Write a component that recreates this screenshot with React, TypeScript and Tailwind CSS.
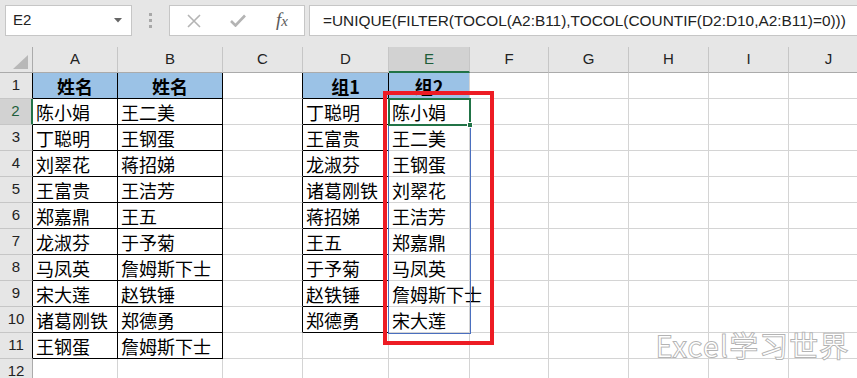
import React from "react";

const colW = [85, 105, 80, 86, 81, 79, 80, 80, 80, 80];
const letters = ["A", "B", "C", "D", "E", "F", "G", "H", "I", "J"];

const A = ["姓名", "陈小娟", "丁聪明", "刘翠花", "王富贵", "郑嘉鼎", "龙淑芬", "马凤英", "宋大莲", "诸葛刚铁", "王钢蛋"];
const B = ["姓名", "王二美", "王钢蛋", "蒋招娣", "王洁芳", "王五", "于予菊", "詹姆斯下士", "赵铁锤", "郑德勇", "詹姆斯下士"];
const D = ["组1", "丁聪明", "王富贵", "龙淑芬", "诸葛刚铁", "蒋招娣", "王五", "于予菊", "赵铁锤", "郑德勇"];
const E = ["组2", "陈小娟", "王二美", "王钢蛋", "刘翠花", "王洁芳", "郑嘉鼎", "马凤英", "詹姆斯下士", "宋大莲"];

const cjk = { fontFamily: '"Noto Sans CJK SC", "Noto Sans", sans-serif' };
const ui = { fontFamily: '"Liberation Sans", Arial, sans-serif' };

function cellValue(c: number, r: number): string {
  if (c === 0) return A[r] ?? "";
  if (c === 1) return B[r] ?? "";
  if (c === 3) return D[r] ?? "";
  if (c === 4) return E[r] ?? "";
  return "";
}

function rightBlack(c: number, r: number) {
  if ((c === 0 || c === 1) && r <= 10) return true;
  if ((c === 2 || c === 3) && r <= 9) return true;
  return false;
}
function bottomBlack(c: number, r: number) {
  if ((c === 0 || c === 1) && r <= 10) return true;
  if (c === 3 && r <= 9) return true;
  return false;
}

export default function App() {
  const rows = Array.from({ length: 12 }, (_, i) => i);
  return (
    <div className="relative w-[857px] h-[378px] overflow-hidden bg-white" style={ui}>
      {/* Toolbar */}
      <div className="h-[47px] bg-[#e6e6e6] flex items-start pt-[5px] pl-[5px]">
        <div className="w-[127px] h-[31px] bg-white border border-[#c6c6c6] flex items-center justify-between pl-[7px] pr-[9px]">
          <span className="text-[15px] text-[#222]">E2</span>
          <svg width="8" height="5" viewBox="0 0 8 5">
            <path d="M0 0 L8 0 L4 4.5 Z" fill="#666" />
          </svg>
        </div>
        <div className="w-[37px] h-[31px] flex flex-col items-center justify-center gap-[3px]">
          <div className="w-[3px] h-[3px] bg-[#a8a8a8]" />
          <div className="w-[3px] h-[3px] bg-[#a8a8a8]" />
          <div className="w-[3px] h-[3px] bg-[#a8a8a8]" />
        </div>
        <div className="w-[136px] h-[31px] bg-white border border-[#c6c6c6] flex items-center">
          <div className="w-[46px] flex justify-center pl-[2px]">
            <svg width="14" height="14" viewBox="0 0 14 14">
              <path d="M1 1 L13 13 M13 1 L1 13" stroke="#b4b4b4" strokeWidth="1.6" />
            </svg>
          </div>
          <div className="w-[44px] flex justify-center">
            <svg width="16" height="13" viewBox="0 0 16 13">
              <path d="M1 7 L5.5 11.5 L15 1.5" stroke="#b4b4b4" strokeWidth="2.6" fill="none" />
            </svg>
          </div>
          <div className="w-[44px] flex justify-center">
            <span className="text-[19px] italic text-[#5a5a5a]" style={{ fontFamily: '"Liberation Serif", serif' }}>
              f<span className="text-[15px]">x</span>
            </span>
          </div>
        </div>
        <div className="ml-[4px] flex-1 h-[31px] bg-white border border-[#c6c6c6] border-r-0 flex items-center pl-[13px]">
          <span className="text-[15.4px] text-[#222] whitespace-nowrap">
            =UNIQUE(FILTER(TOCOL(A2:B11),TOCOL(COUNTIF(D2:D10,A2:B11)=0)))
          </span>
        </div>
      </div>

      {/* Sheet grid */}
      <div
        className="grid"
        style={{
          gridTemplateColumns: `33px ${colW.map((w) => w + "px").join(" ")}`,
          gridTemplateRows: `26px repeat(12, 26px)`,
        }}
      >
        <div className="bg-[#e6e6e6] border-r border-b border-[#ababab] relative flex items-end justify-end pr-[4px] pb-[3px]">
          <svg width="15" height="14" viewBox="0 0 15 14">
            <path d="M15 0 L15 14 L0 14 Z" fill="#b8b8b8" />
          </svg>
        </div>
        {letters.map((l, i) => (
          <div
            key={l}
            className={
              i === 4
                ? "bg-[#d2d2d2] border-r border-[#c6c6c6] border-b-2 border-b-[#217346] flex items-center justify-center text-[15px] text-[#1e5e3a]"
                : "bg-[#e6e6e6] border-r border-[#c6c6c6] border-b border-b-[#ababab] flex items-center justify-center text-[15px] text-[#222]"
            }
          >
            {l}
          </div>
        ))}
        {rows.map((r) => (
          <React.Fragment key={r}>
            <div
              className={
                r === 1
                  ? "bg-[#d2d2d2] border-b border-b-[#c6c6c6] border-r-2 border-r-[#217346] flex items-center justify-center text-[15px] text-[#1e5e3a]"
                  : r <= 10
                  ? "bg-[#e6e6e6] border-b border-b-[#c6c6c6] border-r border-r-black flex items-center justify-center text-[15px] text-[#222]"
                  : "bg-[#e6e6e6] border-b border-b-[#c6c6c6] border-r border-r-[#ababab] flex items-center justify-center text-[15px] text-[#222]"
              }
            >
              {r + 1}
            </div>
            {colW.map((_, c) => {
              const v = cellValue(c, r);
              const header = r === 0 && (c === 0 || c === 1 || c === 3 || c === 4);
              const rb = rightBlack(c, r);
              const bb = bottomBlack(c, r);
              return (
                <div
                  key={c}
                  className={
                    (header ? "bg-[#9bc2e6] font-bold justify-center " : "pl-[3px] ") +
                    (rb ? "border-r border-r-black " : "border-r border-r-[#d4d4d4] ") +
                    (bb ? "border-b border-b-black " : "border-b border-b-[#d4d4d4] ") +
                    "flex items-center text-[18px] text-black whitespace-nowrap overflow-visible leading-none"
                  }
                  style={cjk}
                >
                  {v}
                </div>
              );
            })}
          </React.Fragment>
        ))}
      </div>

      {/* Spill range border */}
      <div className="absolute left-[388px] top-[98px] w-[83px] h-[236px] border border-[#4a6fbf] pointer-events-none" />
      {/* Active cell */}
      <div className="absolute left-[388px] top-[98px] w-[83px] h-[28px] border-2 border-[#217346] pointer-events-none" />
      <div className="absolute left-[467px] top-[122px] w-[6px] h-[6px] bg-[#217346] border border-white pointer-events-none" />
      {/* Red highlight */}
      <div className="absolute left-[383px] top-[91px] w-[111px] h-[254px] border-4 border-[#ed1c24] pointer-events-none" />
      {/* Watermark */}
      <div
        className="absolute left-[656px] top-[330px] text-[28px] leading-[30px] text-white whitespace-nowrap tracking-[2px] [-webkit-text-stroke:2px_#b4b4b4] [paint-order:stroke_fill]"
        style={{ fontFamily: '"Noto Sans CJK SC", "Liberation Sans", sans-serif', fontWeight: 300 }}
      >
        Excel学习世界
      </div>
    </div>
  );
}
